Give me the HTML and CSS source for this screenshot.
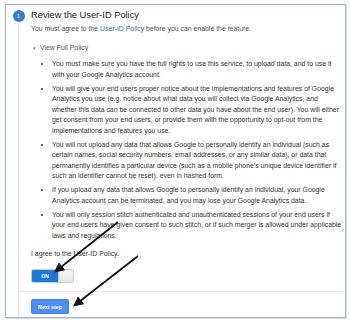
FILE: index.html
```html
<!DOCTYPE html>
<html>
<head>
<meta charset="utf-8">
<link rel="stylesheet" href="styles.css">
</head>
<body>
<div class="frame">
  <div class="rail">
    <div class="step">1</div>
    <div class="connector"></div>
  </div>
  <div class="content">
    <h1 class="title">Review the User-ID Policy</h1>
    <p class="sub">You must agree to the <a class="link">User-ID Policy</a> before you can enable the feature.</p>
    <div class="toggle-policy"><span class="tri">&#9662;</span>View Full Policy</div>
    <ul class="policy">
      <li>You must make sure you have the full rights to use this service, to upload data, and to use it with your Google Analytics account.</li>
      <li>You will give your end users proper notice about the implementations and features of Google Analytics you use (e.g. notice about what data you will collect via Google Analytics, and whether this data can be connected to other data you have about the end user). You will either get consent from your end users, or provide them with the opportunity to opt-out from the implementations and features you use.</li>
      <li>You will not upload any data that allows Google to personally identify an individual (such as certain names, social security numbers, email addresses, or any similar data), or data that permanently identifies a particular device (such as a mobile phone's unique device identifier if such an identifier cannot be reset), even in hashed form.</li>
      <li>If you upload any data that allows Google to personally identify an individual, your Google Analytics account can be terminated, and you may lose your Google Analytics data.</li>
      <li>You will only session stitch authenticated and unauthenticated sessions of your end users if your end users have given consent to such stitch, or if such merger is allowed under applicable laws and regulations.</li>
    </ul>
    <p class="agree">I agree to the User-ID Policy.</p>
    <div class="switch"><span class="on">ON</span><span class="knob"></span></div>
    <div class="sep"></div>
    <button class="next">Next step</button>
  </div>
</div>
<svg class="arrows" width="350" height="325" viewBox="0 0 350 325">
  <defs>
    <marker id="ah" markerWidth="6" markerHeight="6" refX="4.5" refY="3" orient="auto" markerUnits="strokeWidth">
      <path d="M0,0 L6,3 L0,6 Z" fill="#111"/>
    </marker>
  </defs>
  <line x1="118" y1="222" x2="56" y2="271" stroke="#111" stroke-width="1.7" marker-end="url(#ah)"/>
  <line x1="138" y1="256" x2="75" y2="305" stroke="#111" stroke-width="1.7" marker-end="url(#ah)"/>
</svg>
</body>
</html>
```
FILE: styles.css
```css
html, body {
  margin: 0;
  padding: 0;
  background: #ffffff;
}
body {
  width: 350px;
  height: 325px;
  position: relative;
  overflow: hidden;
  font-family: "Liberation Sans", Arial, sans-serif;
  color: #333;
}
.frame {
  position: absolute;
  left: 5px;
  top: 4px;
  width: 339px;
  height: 312px;
  border: 1px solid #a3b5c4;
  box-shadow: 1px 1px 0 #d5dee6;
  display: flex;
  background: #fff;
}
.rail {
  width: 25px;
  display: flex;
  flex-direction: column;
  align-items: center;
  padding-top: 5px;
  flex: none;
}
.step {
  width: 12px;
  height: 12px;
  border-radius: 50%;
  background: #3a7bc8;
  color: #dbe8f7;
  font-size: 5px;
  line-height: 12px;
  text-align: center;
  font-weight: bold;
  flex: none;
}
.connector {
  width: 1px;
  flex: 1;
  background: #e2e6ea;
}
.content {
  flex: 1;
  padding-right: 2px;
}
.title {
  margin: 4px 0 0 0;
  font-size: 9.3px;
  line-height: 12px;
  font-weight: normal;
  color: #222;
}
.sub {
  margin: 3px 0 0 0;
  font-size: 6.9px;
  line-height: 10px;
  color: #555;
}
.link {
  color: #3b6fb6;
}
.toggle-policy {
  margin-top: 9px;
  font-size: 6.9px;
  line-height: 10px;
  color: #555;
  padding-left: 2px;
}
.tri {
  font-size: 5px;
  margin-right: 4px;
  color: #777;
}
.policy {
  margin: 6px 0 0 0;
  padding-left: 21px;
  font-size: 6.9px;
  line-height: 10.5px;
  color: #333;
}
.policy li {
  margin-bottom: 3.5px;
}
.agree {
  margin: 8px 0 0 0;
  font-size: 6.9px;
  line-height: 10px;
  color: #333;
}
.switch {
  margin-top: 10px;
  width: 43px;
  height: 14px;
  display: flex;
  border-radius: 2px;
  overflow: hidden;
  border: 1px solid #c9ced3;
  box-sizing: border-box;
}
.on {
  width: 26px;
  background: #1e78d8;
  color: #fff;
  font-size: 5px;
  font-weight: bold;
  line-height: 12px;
  text-align: center;
}
.knob {
  flex: 1;
  background: linear-gradient(#f6f6f6, #e6e6e6);
  border-left: 1px solid #c9ced3;
}
.sep {
  margin: 8px 0 0 -11px;
  height: 1px;
  background: #e8ebee;
}
.next {
  display: block;
  margin-top: 7px;
  width: 38px;
  height: 15px;
  padding: 0;
  border: 1px solid #3f7fe0;
  border-radius: 2px;
  background: #4d8ef0;
  color: #fff;
  font-family: "Liberation Sans", Arial, sans-serif;
  font-size: 5.3px;
  font-weight: bold;
}
.arrows {
  position: absolute;
  left: 0;
  top: 0;
  pointer-events: none;
}
```
